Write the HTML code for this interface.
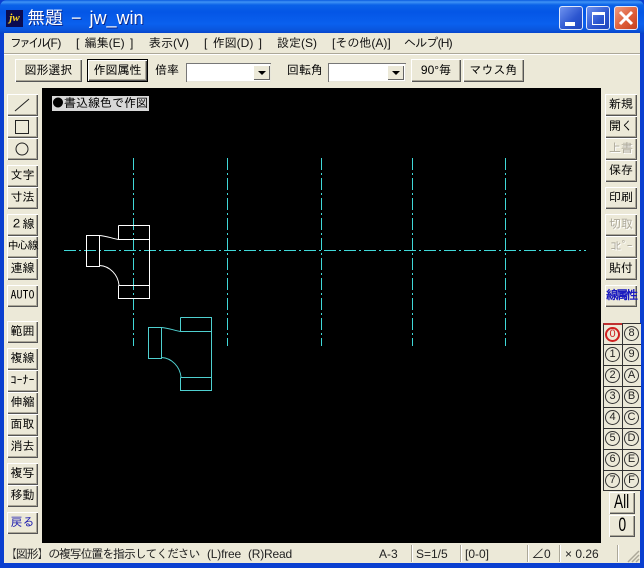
<!DOCTYPE html>
<html lang="ja"><head><meta charset="utf-8"><title>無題 - jw_win</title>
<style>
html,body{margin:0;padding:0}
body{width:644px;height:568px;overflow:hidden;position:relative;background:#0a3fd0;font-family:"Liberation Sans","IPAGothic","Noto Sans CJK JP",sans-serif;font-size:12px;color:#000}
div,span{position:absolute;box-sizing:border-box;white-space:nowrap}
#tb{left:0;top:0;width:644px;height:34px;background:linear-gradient(#0a5be0 0,#3f93f5 2px,#0a62e8 5px,#0456e6 12px,#0a60ee 24px,#0a55dc 30px,#0540c8 34px);border-radius:7px 7px 0 0}
#cl{left:4px;top:33px;width:636px;height:530px;background:#ece9d8}
.b{background:#ece9d8;box-shadow:inset 1px 1px 0 #fff,inset -1px -1px 0 #555,inset -2px -2px 0 #aca899;text-align:center;line-height:21px;height:22px}
.l{left:7px;width:31px}
.r{left:605px;width:32px}
.d{color:#aca899;text-shadow:1px 1px 0 #fff}
.n{font-family:"IPAGothic",sans-serif}
.c{width:19px;height:21px;border-top:1px solid #333;border-left:1px solid #333;background:#ece9d8}
.c span{left:1px;top:2px;width:15px;height:15px;border:1px solid #333;border-radius:50%;text-align:center;line-height:13px;font-size:11px;color:#222}
.m{top:36px;height:14px;line-height:14px;color:#111}
.w{top:6px;width:24px;height:24px;border:1px solid #dfe8fb;border-radius:3px}
.s{top:547px;line-height:14px;color:#222}
.e{top:545px;width:1px;height:17px;background:#aca899;border-right:1px solid #fff;box-sizing:content-box}
.cb{top:63px;height:19px;background:#fff;box-shadow:inset 1px 1px 0 #777,inset -1px -1px 0 #e8e6da}
.ar{width:17px;height:15px;top:65px;background:#ece9d8;box-shadow:inset 1px 1px 0 #fff,inset -1px -1px 0 #666}
.ar:after{content:"";position:absolute;left:5px;top:6px;border:4px solid transparent;border-top:4px solid #000;border-bottom:0}
i{font-style:normal;display:inline-block;transform:scaleX(.72);font-size:19px}
.v{top:158px;width:1px;height:188px;background:repeating-linear-gradient(#40d8d8 0 12px,#000 12px 15px,#40d8d8 15px 17px,#000 17px 20px)}
</style></head><body>
<div id="tb"></div>
<div style="left:6px;top:10px;width:17px;height:17px;background:#0b0b50;color:#ffd820;font:italic bold 11px/16px 'Liberation Serif',serif;text-align:center">jw</div>
<div style="left:27px;top:7px;height:22px;line-height:22px;font-size:18px;color:#fff;word-spacing:3px;text-shadow:1px 1px 0 #0a2a90">無題 − jw_win</div>
<div class="w" style="left:559px;background:linear-gradient(135deg,#6f93ef,#2b55cf 60%,#1f45bd)"><div style="left:5px;top:15px;width:10px;height:4px;background:#fff"></div></div>
<div class="w" style="left:586px;background:linear-gradient(135deg,#6f93ef,#2b55cf 60%,#1f45bd)"><div style="left:5px;top:5px;width:13px;height:13px;border:1px solid #fff;border-top:3px solid #fff"></div></div>
<div class="w" style="left:614px;background:linear-gradient(135deg,#ee9a7e,#dc5a35 60%,#c2401f)"><svg style="position:absolute;left:3px;top:3px" width="16" height="16"><path d="M2 2L14 14M14 2L2 14" stroke="#fff" stroke-width="3"/></svg></div>
<div id="cl"></div>
<div style="left:4px;top:53px;width:636px;height:2px;background:#fff;border-top:1px solid #aca899"></div>
<span class="m" style="left:10px;letter-spacing:-3px">ファイル</span>
<span class="m" style="left:47px;letter-spacing:-.5px">(F)</span>
<span class="m" style="left:76px;word-spacing:2px">[ 編集(E) ]</span>
<span class="m" style="left:149px">表示(V)</span>
<span class="m" style="left:204px;word-spacing:2px">[ 作図(D) ]</span>
<span class="m" style="left:277px">設定(S)</span>
<span class="m" style="left:332px">[その他(A)]</span>
<span class="m" style="left:404px;letter-spacing:-.8px">ヘルプ(H)</span>

<div class="b" style="left:15px;top:59px;width:67px;height:23px;line-height:22px">図形選択</div>
<div class="b" style="left:87px;top:59px;width:61px;height:23px;line-height:20px;border:1px solid #000">作図属性</div>
<span style="left:155px;top:63px;line-height:14px">倍率</span>
<div class="cb" style="left:186px;width:85px"></div><div class="ar" style="left:253px"></div>
<span style="left:287px;top:63px;line-height:14px">回転角</span>
<div class="cb" style="left:328px;width:78px"></div><div class="ar" style="left:387px"></div>
<div class="b" style="left:411px;top:59px;width:50px;height:23px;line-height:22px">90°毎</div>
<div class="b" style="left:463px;top:59px;width:61px;height:23px;line-height:22px">マウス角</div>

<div style="left:42px;top:88px;width:559px;height:455px;background:#000"></div>
<div class="v" style="left:133px"></div>
<div class="v" style="left:227px"></div>
<div class="v" style="left:321px"></div>
<div class="v" style="left:412px"></div>
<div class="v" style="left:505px"></div>
<div style="left:64px;top:250px;width:522px;height:1px;background:repeating-linear-gradient(90deg,#40d8d8 0 12px,#000 12px 15px,#40d8d8 15px 17px,#000 17px 20px)"></div>
<svg style="position:absolute;left:42px;top:88px" width="559" height="455">
<g transform="translate(-42,-88)" fill="none" shape-rendering="crispEdges">
<g stroke="#fff">
<path d="M86.5 235.5H99.5V266.5H86.5ZM118.5 225.5H149.5V298.5H118.5V285.5M118.5 225.5V239.5M118.5 239.5H149.5M118.5 285.5H149.5"/>
</g>
<path d="M99.5 235.5C106 236 111 238 118.5 239.5M99.5 265.5C110 266 118 275 119 285" stroke="#fff" shape-rendering="auto"/>
<g stroke="#4fd0d0" transform="translate(62,92)">
<path d="M86.5 235.5H99.5V266.5H86.5ZM118.5 225.5H149.5V298.5H118.5V285.5M118.5 225.5V239.5M118.5 239.5H149.5M118.5 285.5H149.5"/>
<path d="M99.5 235.5C106 236 111 238 118.5 239.5M99.5 265.5C110 266 118 275 119 285" shape-rendering="auto"/>
</g>
</g>
</svg>
<div class="n" style="left:52px;top:96px;width:97px;height:15px;background:#d8d8d8;line-height:15px;font-size:12px;color:#000">●書込線色で作図</div>

<div class="b l" style="top:94px"><svg width="31" height="22" style="position:absolute;left:0;top:0"><path d="M8 17L22 5" stroke="#222"/></svg></div>
<div class="b l" style="top:116px"><svg width="31" height="22" style="position:absolute;left:0;top:0"><rect x="8.5" y="4.5" width="13" height="13" fill="none" stroke="#222"/></svg></div>
<div class="b l" style="top:138px"><svg width="31" height="22" style="position:absolute;left:0;top:0"><circle cx="15" cy="11" r="6" fill="none" stroke="#222"/></svg></div>
<div class="b l" style="top:165px">文字</div>
<div class="b l" style="top:187px">寸法</div>
<div class="b l" style="top:214px">２線</div>
<div class="b l" style="top:236px;font-size:11px;letter-spacing:-1px">中心線</div>
<div class="b l" style="top:258px">連線</div>
<div class="b l n" style="top:285px">AUTO</div>
<div class="b l" style="top:321px">範囲</div>
<div class="b l" style="top:348px">複線</div>
<div class="b l n" style="top:370px">ｺｰﾅｰ</div>
<div class="b l" style="top:392px">伸縮</div>
<div class="b l" style="top:414px">面取</div>
<div class="b l" style="top:436px">消去</div>
<div class="b l" style="top:463px">複写</div>
<div class="b l" style="top:485px">移動</div>
<div class="b l" style="top:512px;color:#2222b0">戻る</div>

<div class="b r" style="top:94px">新規</div>
<div class="b r" style="top:116px">開く</div>
<div class="b r d" style="top:138px">上書</div>
<div class="b r" style="top:160px">保存</div>
<div class="b r" style="top:187px">印刷</div>
<div class="b r d" style="top:214px">切取</div>
<div class="b r d n" style="top:236px;letter-spacing:-1px">ｺﾋﾟｰ</div>
<div class="b r" style="top:258px">貼付</div>
<div class="b r" style="top:285px;color:#1a1ac0;letter-spacing:-2px;font-weight:bold">線属性</div>

<div class="c" style="left:603px;top:323px;border-top:2px solid #c03030"><span style="color:#d02020;border:2px solid #d02020;line-height:11px">0</span></div>
<div class="c" style="left:622px;top:323px"><span>8</span></div>
<div class="c" style="left:603px;top:344px"><span>1</span></div><div class="c" style="left:622px;top:344px"><span>9</span></div>
<div class="c" style="left:603px;top:365px"><span>2</span></div><div class="c" style="left:622px;top:365px"><span>A</span></div>
<div class="c" style="left:603px;top:386px"><span>3</span></div><div class="c" style="left:622px;top:386px"><span>B</span></div>
<div class="c" style="left:603px;top:407px"><span>4</span></div><div class="c" style="left:622px;top:407px"><span>C</span></div>
<div class="c" style="left:603px;top:428px"><span>5</span></div><div class="c" style="left:622px;top:428px"><span>D</span></div>
<div class="c" style="left:603px;top:449px"><span>6</span></div><div class="c" style="left:622px;top:449px"><span>E</span></div>
<div class="c" style="left:603px;top:470px"><span>7</span></div><div class="c" style="left:622px;top:470px"><span>F</span></div>
<div style="left:603px;top:490px;width:38px;height:1px;background:#333"></div>
<div class="b" style="left:609px;top:492px;width:26px;height:22px"><i>All</i></div>
<div class="b" style="left:609px;top:515px;width:26px;height:22px"><i>0</i></div>

<span class="s" style="left:5px;letter-spacing:-1.2px">【図形】の複写位置を指示してください</span>
<span class="s" style="left:207px;letter-spacing:-.2px">(L)free</span>
<span class="s" style="left:248px;letter-spacing:-.2px">(R)Read</span>
<span class="s" style="left:379px">A-3</span>
<span class="s" style="left:416px">S=1/5</span>
<span class="s" style="left:465px">[0-0]</span>
<span class="s" style="left:532px">∠0</span>
<span class="s" style="left:565px">× 0.26</span>
<div class="e" style="left:411px"></div>
<div class="e" style="left:460px"></div>
<div class="e" style="left:527px"></div>
<div class="e" style="left:559px"></div>
<div class="e" style="left:617px"></div>
<svg style="position:absolute;left:626px;top:549px" width="14" height="14"><path d="M2 13L13 2M6 13L13 6M10 13L13 10" stroke="#aca899" stroke-width="1.5"/></svg>
</body></html>
